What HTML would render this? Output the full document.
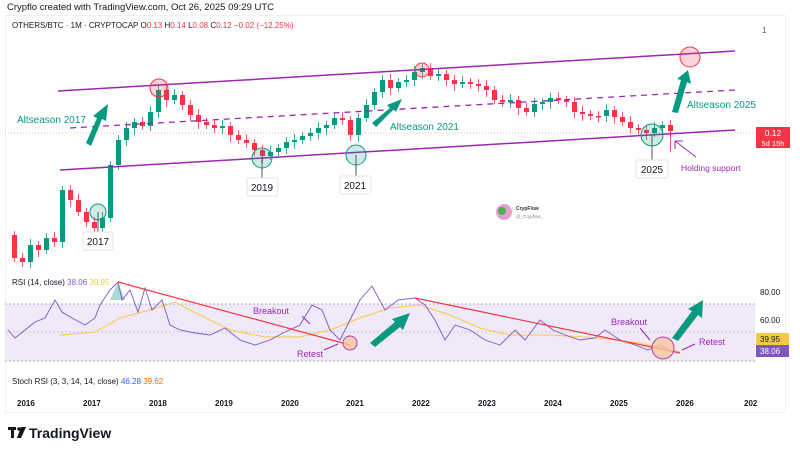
<!DOCTYPE html>
<html><head><meta charset="utf-8"><style>
body{margin:0;width:800px;height:450px;background:#fff;overflow:hidden;font-family:"Liberation Sans",sans-serif}
</style></head><body>
<svg id="s" width="800" height="450" xmlns="http://www.w3.org/2000/svg" font-family="Liberation Sans, sans-serif">
<text x="7" y="10" font-size="9.5" fill="#131722">Crypflo created with TradingView.com, Oct 26, 2025 09:29 UTC</text>
<rect x="5.5" y="15.5" width="780" height="397" fill="none" stroke="#eef0f3"/>
<text x="12" y="28" font-size="8" fill="#131722">OTHERS/BTC · 1M · CRYPTOCAP  O<tspan fill="#f23645">0.13</tspan>  H<tspan fill="#f23645">0.14</tspan>  L<tspan fill="#f23645">0.08</tspan>  C<tspan fill="#f23645">0.12</tspan>  <tspan fill="#f23645">−0.02 (−12.25%)</tspan></text>
<text x="762" y="33" font-size="8" fill="#555">1</text>
<line x1="5" y1="133" x2="755" y2="133" stroke="#f5a0a8" stroke-dasharray="1,2" stroke-width="0.8"/>
<g id="c"></g>
<line x1="58" y1="91" x2="735" y2="51" stroke="#9c27b0" stroke-width="1.5"/>
<line x1="60" y1="170" x2="735" y2="130" stroke="#9c27b0" stroke-width="1.5"/>
<line x1="70" y1="128" x2="735" y2="90" stroke="#9c27b0" stroke-width="1.3" stroke-dasharray="6,5"/>
<g fill="#f23645" fill-opacity="0.22" stroke="#f23645" stroke-width="1">
<circle cx="159" cy="88" r="9"/><circle cx="422" cy="70" r="7"/><circle cx="690" cy="57" r="10"/></g>
<g fill="#089981" fill-opacity="0.2" stroke="#089981" stroke-width="1">
<circle cx="98" cy="212" r="8"/><circle cx="262" cy="158" r="10"/><circle cx="356" cy="155" r="10"/><circle cx="652" cy="135" r="11"/></g>
<g stroke="#555" stroke-width="1"><line x1="98" y1="212" x2="98" y2="232"/><line x1="262" y1="158" x2="262" y2="178"/><line x1="356" y1="155" x2="356" y2="176"/><line x1="652" y1="135" x2="652" y2="160"/></g>
<g font-size="10" fill="#131722" text-anchor="middle">
<rect x="83" y="232" width="30" height="18" rx="2" fill="#fff" stroke="#e0e3eb"/><text x="98" y="245">2017</text>
<rect x="247" y="178" width="31" height="18" rx="2" fill="#fff" stroke="#e0e3eb"/><text x="262" y="191">2019</text>
<rect x="340" y="176" width="31" height="18" rx="2" fill="#fff" stroke="#e0e3eb"/><text x="355" y="189">2021</text>
<rect x="636" y="160" width="32" height="18" rx="2" fill="#fff" stroke="#e0e3eb"/><text x="652" y="173">2025</text></g>
<g fill="#089981">
<polygon points="86,143 97,118 93,116 108,104 106,121 102,119 91,146"/>
<polygon points="372,123 390,108 387,105 402,99 396,112 394,109 376,127"/>
<polygon points="672,112 681,80 677,79 688,70 691,84 687,82 678,113"/>
<text x="17" y="123" font-size="10">Altseason 2017</text>
<text x="390" y="130" font-size="10">Altseason 2021</text>
<text x="687" y="108" font-size="10">Altseason 2025</text></g>
<text x="681" y="171" font-size="8.5" fill="#9c27b0">Holding support</text>
<polyline points="696,157 675,141" stroke="#9c27b0" fill="none"/><polyline points="675,149 675,141 683,141" stroke="#9c27b0" fill="none"/>
<rect x="756" y="127" width="34" height="21" fill="#f23645"/>
<text x="773" y="136" font-size="8.5" fill="#fff" text-anchor="middle">0.12</text>
<text x="773" y="146" font-size="7.5" fill="#fff" text-anchor="middle">5d 15h</text>
<circle cx="504" cy="212" r="8" fill="#e6a0d0"/><circle cx="502" cy="211" r="4" fill="#4caf50"/>
<text x="516" y="210" font-size="5" fill="#333" font-weight="bold">CrypFlow</text><text x="516" y="218" font-size="4.5" fill="#888">@_Crypflow_</text>
<!-- RSI -->
<text x="12" y="285" font-size="8" fill="#131722">RSI (14, close)  <tspan fill="#7e57c2">38.06</tspan>  <tspan fill="#f7c948">39.95</tspan></text>
<rect x="5" y="304" width="750" height="57" fill="#efe9f9"/>
<line x1="5" y1="304" x2="755" y2="304" stroke="#999" stroke-dasharray="2,2" stroke-width="0.7"/>
<line x1="5" y1="332" x2="755" y2="332" stroke="#bbb" stroke-dasharray="2,2" stroke-width="0.7"/>
<line x1="5" y1="361" x2="755" y2="361" stroke="#999" stroke-dasharray="2,2" stroke-width="0.7"/>
<polygon points="110,300 118,282 125,300" fill="#089981" fill-opacity="0.35"/>
<polyline fill="none" stroke="#f7c948" stroke-width="1" points="60,335 95,332 120,318 150,310 175,302 200,315 230,330 265,337 300,337 330,330 360,318 390,308 420,305 450,315 480,328 510,335 550,335 600,338 640,343 680,352"/>
<polyline fill="none" stroke="#7e57c2" stroke-width="0.9" points="8,330 15,338 25,330 35,322 45,318 55,300 62,312 72,318 85,325 95,318 100,305 110,290 118,282 122,300 130,290 138,312 145,288 152,310 162,300 170,325 180,330 195,333 210,335 225,328 240,340 255,345 270,340 285,332 300,325 312,305 322,310 330,330 340,340 350,320 360,300 372,286 385,310 398,300 415,298 425,305 435,320 445,340 455,325 470,330 485,340 500,345 515,330 525,340 540,320 553,330 565,335 580,340 595,338 605,330 620,340 635,345 648,350 660,345 672,352"/>
<line x1="118" y1="282" x2="350" y2="345" stroke="#f23645" stroke-width="1.2"/>
<line x1="415" y1="298" x2="680" y2="353" stroke="#f23645" stroke-width="1.2"/>
<circle cx="350" cy="343" r="7" fill="#f7c59f" fill-opacity="0.8" stroke="#b040b0"/>
<circle cx="663" cy="348" r="11" fill="#f7c59f" fill-opacity="0.8" stroke="#b040b0"/>
<g fill="#089981"><polygon points="370,343 395,322 392,319 410,313 403,330 400,327 375,347"/>
<polygon points="672,338 692,311 688,309 703,300 702,318 698,315 678,341"/></g>
<g font-size="9" fill="#9c27b0"><text x="253" y="314">Breakout</text><text x="297" y="357">Retest</text><text x="611" y="325">Breakout</text><text x="699" y="345">Retest</text></g>
<g stroke="#9c27b0" fill="none"><polyline points="302,316 310,324"/><polyline points="324,350 338,344"/><polyline points="640,328 650,340"/><polyline points="695,344 682,350"/></g>
<g font-size="8" fill="#131722"><text x="760" y="295">80.00</text><text x="760" y="323">60.00</text></g>
<rect x="756" y="333" width="33" height="12" fill="#f7c948"/><text x="760" y="342" font-size="8" fill="#131722">39.95</text>
<rect x="756" y="345" width="33" height="12" fill="#7e57c2"/><text x="760" y="354" font-size="8" fill="#fff">38.06</text>
<text x="12" y="384" font-size="8" fill="#131722">Stoch RSI (3, 3, 14, 14, close)  <tspan fill="#2962ff">46.28</tspan>  <tspan fill="#ff6d00">39.62</tspan></text>
<g font-size="8" fill="#131722" font-weight="bold"><text x="17" y="406">2016</text><text x="83" y="406">2017</text><text x="149" y="406">2018</text><text x="215" y="406">2019</text><text x="281" y="406">2020</text><text x="346" y="406">2021</text><text x="412" y="406">2022</text><text x="478" y="406">2023</text><text x="544" y="406">2024</text><text x="610" y="406">2025</text><text x="676" y="406">2026</text><text x="744" y="406">202</text></g>
<g fill="#131722"><rect x="8" y="427" width="8" height="3"/><rect x="11" y="427" width="3" height="11"/><circle cx="19" cy="429" r="1.8"/><polygon points="21,427 26,427 21,438 17,438"/></g>
<text x="29" y="438" font-size="14" font-weight="bold" fill="#131722">TradingView</text>
</svg>
<script>
var cl=[258,262,245,250,238,242,190,200,212,222,228,218,165,140,128,122,126,112,90,100,95,105,115,122,125,128,126,135,140,143,150,156,152,148,142,140,136,133,128,125,118,120,135,118,105,92,80,88,82,80,72,68,76,74,80,84,82,84,86,90,100,102,100,108,112,104,102,98,100,102,112,114,116,116,110,117,122,128,130,133,128,125,131];
var g=document.getElementById('c'),o=235,h='';
for(var i=0;i<cl.length;i++){var x=12+i*8,c=cl[i],col=c<o?'#089981':'#f23645',t=Math.min(o,c),b=Math.max(o,c);if(b-t<1.5)b=t+1.5;
h+='<line x1="'+(x+2.5)+'" x2="'+(x+2.5)+'" y1="'+(t-4-(i%3))+'" y2="'+(b+4+(i%4))+'" stroke="'+col+'" stroke-width="0.8"/>';
h+='<rect x="'+x+'" y="'+t+'" width="5" height="'+(b-t)+'" fill="'+col+'"/>';o=c;}
h+='<line x1="670.5" x2="670.5" y1="131" y2="152" stroke="#f23645" stroke-width="0.8"/>';
g.innerHTML=h;
</script>
</body></html>
